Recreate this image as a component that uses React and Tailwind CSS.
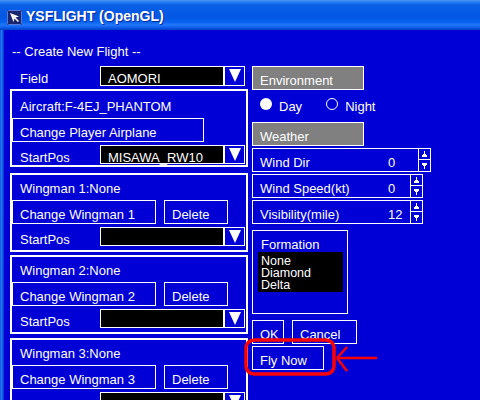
import React from "react";

const DownTri = () => (
  <svg width="12" height="13" viewBox="0 0 12 13">
    <polygon points="0,0 12,0 6,13" fill="white" />
  </svg>
);

const UpTick = () => (
  <svg width="5" height="6" viewBox="0 0 5 6" shapeRendering="crispEdges">
    <path d="M2 0h1v3h1v1h1v2H0V4h1V3h1z" fill="white" />
  </svg>
);

const DownTick = () => (
  <svg width="5" height="6" viewBox="0 0 5 6" shapeRendering="crispEdges">
    <path d="M0 0h5v2H4v1H3v3H2V3H1V2H0z" fill="white" />
  </svg>
);

function Dropdown({ value, h }) {
  return (
    <div className="flex">
      <div className={`w-[124px] ${h} bg-black border border-white pl-[7px] pt-[4px] leading-[15px] whitespace-nowrap`}>
        {value}
      </div>
      <div className={`w-[21px] ${h} border border-white flex justify-center pt-[2px]`}>
        <DownTri />
      </div>
    </div>
  );
}

function Btn({ w, children }) {
  return (
    <div className={`${w} h-[24px] border border-white pl-[7px] pt-[6px] leading-[15px] whitespace-nowrap`}>
      {children}
    </div>
  );
}

function Panel({ title, buttons, dropdown, className }) {
  return (
    <div className={`border-2 border-white flex flex-col ${className}`}>
      <div className="pl-[8px] leading-[15px]">{title}</div>
      <div className="flex gap-[8px] mt-[4px]">{buttons}</div>
      <div className="flex mt-[3px]">
        <div className="w-[88px] pl-[8px] pt-[5px] leading-[15px]">StartPos</div>
        <Dropdown value={dropdown} h="h-[19px]" />
      </div>
    </div>
  );
}

function SpinField({ label, value, w }) {
  return (
    <div className="flex h-[24px]">
      <div className={`${w} border border-white flex pl-[7px] pt-[6px] leading-[15px]`}>
        <span className="w-[128px] shrink-0">{label}</span>
        <span>{value}</span>
      </div>
      <div className="w-[12px] border-y border-r border-white flex flex-col">
        <div className="h-[11px] border-b border-white flex items-center justify-center">
          <UpTick />
        </div>
        <div className="flex-1 flex items-center justify-center">
          <DownTick />
        </div>
      </div>
    </div>
  );
}

export default function App() {
  return (
    <div className="relative w-[480px] h-[400px] overflow-hidden bg-[#0000d6] text-white text-[13px] font-['Liberation_Sans',Arial,sans-serif]">
      {/* title bar */}
      <div className="h-[30px] flex items-start pl-[7px] pt-[8px] bg-[linear-gradient(to_bottom,#4a96f8_0px,#2a7ef2_2px,#0a5fe6_5px,#0257e4_17px,#0862ee_22px,#2377fc_25px,#0a58e6_28px,#0340c4_30px)]">
        <svg width="15" height="15" viewBox="0 0 15 15" className="mt-[2px]">
          <rect x="0" y="0" width="15" height="15" rx="1" fill="#18266e" />
          <rect x="0.5" y="0.5" width="14" height="14" rx="1" fill="none" stroke="#5a7ad8" />
          <polygon points="3,3 12,6.5 8.5,7.5 12,11 11,12 7.5,8.5 6.5,12" fill="white" />
        </svg>
        <span className="ml-[4px] font-bold text-[14px] leading-[16px] [text-shadow:1px_1px_#0b2a9a]">
          YSFLIGHT (OpenGL)
        </span>
      </div>

      <div className="flex h-[370px]">
        <div className="w-[4px] bg-[linear-gradient(to_right,#0a4fd8,#2a78f6,#0a5ae8,#0034b8)]" />

        <div className="flex flex-col pl-[6px] pt-[14px]">
          <div className="ml-[2px] leading-[15px]">-- Create New Flight --</div>

          <div className="flex gap-[4px] mt-[7px]">
            {/* left column */}
            <div className="w-[238px] flex flex-col">
              <div className="flex h-[20px]">
                <div className="w-[90px] pl-[10px] pt-[5px] leading-[15px]">Field</div>
                <Dropdown value="AOMORI" h="h-[20px]" />
              </div>

              <Panel
                className="mt-[3px] pt-[8px]"
                title="Aircraft:F-4EJ_PHANTOM"
                buttons={<Btn w="w-[192px]">Change Player Airplane</Btn>}
                dropdown="MISAWA_RW10"
              />
              <Panel
                className="mt-[6px] pt-[6px] pb-[3px]"
                title="Wingman 1:None"
                buttons={
                  <>
                    <Btn w="w-[144px]">Change Wingman 1</Btn>
                    <Btn w="w-[64px]">Delete</Btn>
                  </>
                }
                dropdown=""
              />
              <Panel
                className="mt-[3px] pt-[6px] pb-[3px]"
                title="Wingman 2:None"
                buttons={
                  <>
                    <Btn w="w-[144px]">Change Wingman 2</Btn>
                    <Btn w="w-[64px]">Delete</Btn>
                  </>
                }
                dropdown=""
              />
              <Panel
                className="mt-[4px] pt-[6px] pb-[3px]"
                title="Wingman 3:None"
                buttons={
                  <>
                    <Btn w="w-[144px]">Change Wingman 3</Btn>
                    <Btn w="w-[64px]">Delete</Btn>
                  </>
                }
                dropdown=""
              />
            </div>

            {/* right column */}
            <div className="w-[180px] flex flex-col">
              <div className="w-[112px] h-[24px] bg-[#808080] border border-white pl-[7px] pt-[6px] leading-[15px]">
                Environment
              </div>
              <div className="h-[32px] flex items-start pt-[8px] pl-[8px]">
                <div className="w-[12px] h-[12px] rounded-full bg-white" />
                <span className="ml-[7px] mt-[1px] leading-[15px]">Day</span>
                <div className="ml-[24px] w-[12px] h-[12px] rounded-full border border-white" />
                <span className="ml-[7px] mt-[1px] leading-[15px]">Night</span>
              </div>
              <div className="w-[112px] h-[24px] bg-[#808080] border border-white pl-[7px] pt-[6px] leading-[15px]">
                Weather
              </div>
              <div className="mt-[2px]">
                <SpinField label="Wind Dir" value="0" w="w-[167px]" />
              </div>
              <div className="mt-[2px]">
                <SpinField label="Wind Speed(kt)" value="0" w="w-[159px]" />
              </div>
              <div className="mt-[2px]">
                <SpinField label="Visibility(mile)" value="12" w="w-[159px]" />
              </div>

              <div className="mt-[6px] w-[96px] h-[84px] border border-white pt-[6px]">
                <div className="pl-[8px] leading-[15px]">Formation</div>
                <div className="ml-[5px] w-[85px] h-[40px] bg-black pl-[3px] pt-[3px] text-[12.5px] leading-[12px]">
                  <div>None</div>
                  <div>Diamond</div>
                  <div>Delta</div>
                </div>
              </div>

              <div className="flex gap-[8px] mt-[6px]">
                <Btn w="w-[32px]">OK</Btn>
                <Btn w="w-[65px]">Cancel</Btn>
              </div>
              <div className="mt-[2px]">
                <Btn w="w-[72px]">Fly Now</Btn>
              </div>
            </div>
          </div>
        </div>
      </div>

      {/* red annotation */}
      <svg className="absolute left-0 top-0 pointer-events-none" width="480" height="400" viewBox="0 0 480 400">
        <rect x="246" y="340" width="88" height="34" rx="8" fill="none" stroke="#ff0000" strokeWidth="3.5" />
        <line x1="337" y1="358" x2="377" y2="358" stroke="#ff0000" strokeWidth="2.5" />
        <line x1="337" y1="358" x2="347" y2="347" stroke="#ff0000" strokeWidth="2.5" />
        <line x1="337" y1="358" x2="347" y2="371" stroke="#ff0000" strokeWidth="2.5" />
      </svg>
    </div>
  );
}
